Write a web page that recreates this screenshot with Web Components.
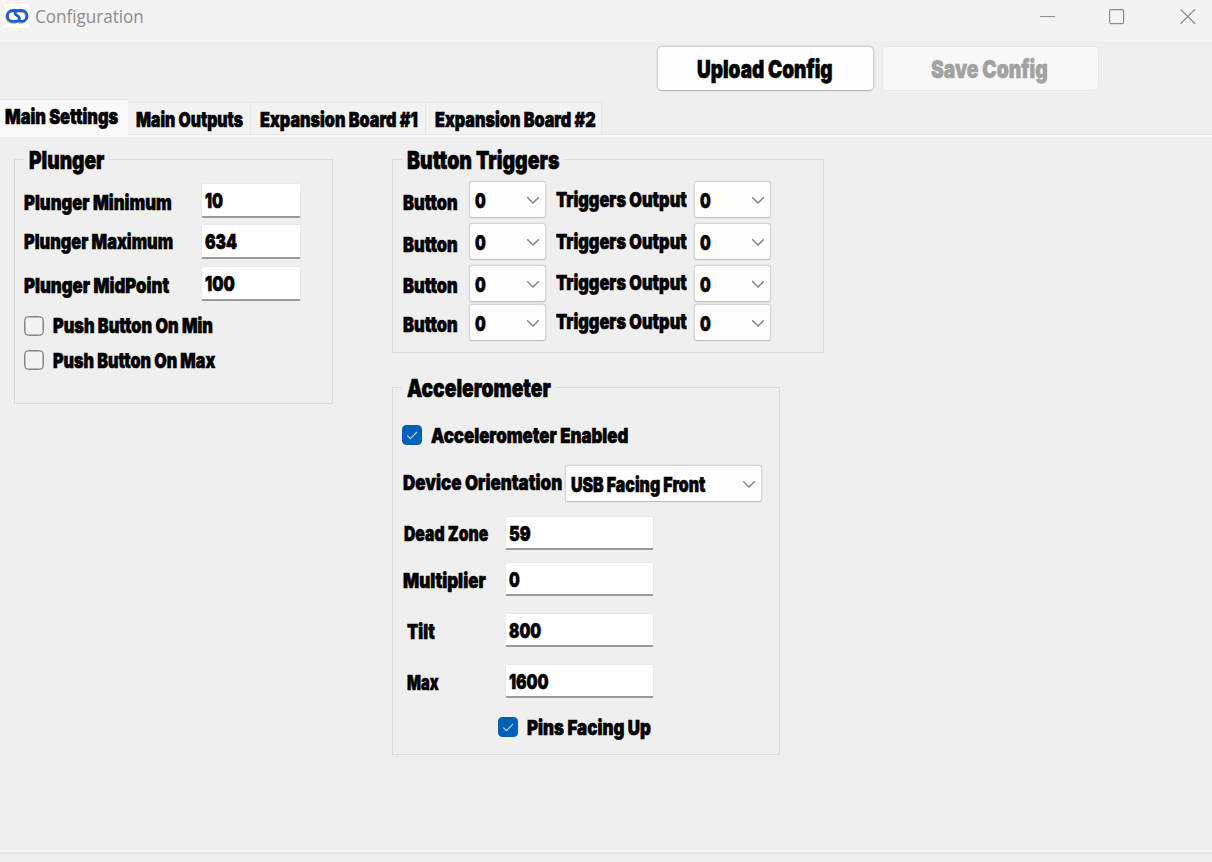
<!DOCTYPE html>
<html lang="en">
<head>
<meta charset="utf-8">
<title>Configuration</title>
<style>
html,body{margin:0;height:100%;overflow:hidden;background:#efefef}
</style>
</head>
<body>
<config-window></config-window>
<script>
function shadow(el, html){ const r = el.attachShadow({mode:'open'}); r.innerHTML = html; return r; }

/* Condensed heavy label, fitted to the width given in "w". */
class UiText extends HTMLElement{
  connectedCallback(){
    if(this.shadowRoot) return;
    const w = +this.getAttribute('w');
    const r = shadow(this, `<style>
      :host{display:block;flex:none;width:${w}px;height:20px;line-height:20px;white-space:nowrap;
        font:900 20.6px/20px Inter,"Liberation Sans",sans-serif;color:#000}
      :host([size=lg]){font-size:25px}
      :host([size=title]){font:400 18px/20px "Open Sans",sans-serif;color:#8c8c8c}
      :host([disabled]){color:#a2a2a2}
      span{display:inline-block;transform-origin:0 50%;-webkit-text-stroke:.6px currentColor}
      :host([size=title]) span{-webkit-text-stroke:0}
    </style><span><slot></slot></span>`);
    const s = r.querySelector('span');
    s.style.transform = `scaleX(${w / s.offsetWidth})`;
  }
}
customElements.define('ui-text', UiText);

class UiRow extends HTMLElement{
  connectedCallback(){
    if(this.shadowRoot) return;
    shadow(this, `<style>:host{display:flex;align-items:flex-start;height:${this.getAttribute('h')}px;margin-top:${this.getAttribute('mt')||0}px}</style><slot></slot>`);
  }
}
customElements.define('ui-row', UiRow);

class UiInput extends HTMLElement{
  connectedCallback(){
    if(this.shadowRoot) return;
    shadow(this, `<style>
      :host{display:block;flex:none;box-sizing:border-box;width:${this.getAttribute('w')}px;height:100%;padding:7px 0 0 3px;
        background:#fff;border:1px solid #e9e9e9;border-bottom:2px solid #999;border-radius:2px}
    </style><slot></slot>`);
  }
}
customElements.define('ui-input', UiInput);

class UiSelect extends HTMLElement{
  connectedCallback(){
    if(this.shadowRoot) return;
    shadow(this, `<style>
      :host{display:flex;flex:none;box-sizing:border-box;width:${this.getAttribute('w')}px;height:37px;padding:9px 5px 0 5px;justify-content:space-between;
        background:#fdfdfd;border:1px solid #d6d6d6;border-bottom-color:#c0c0c0;border-radius:3px;box-shadow:0 0 0 .5px #dedede}
      svg{flex:none;margin-top:5px}
    </style><slot></slot><svg width="14" height="9" viewBox="0 0 14 9"><path d="M1.2 1.3 7 7 12.8 1.3" fill="none" stroke="#858585" stroke-width="1.5"/></svg>`);
  }
}
customElements.define('ui-select', UiSelect);

class UiCheck extends HTMLElement{
  connectedCallback(){
    if(this.shadowRoot) return;
    shadow(this, `<style>
      :host{display:flex;height:20px;gap:9px}
      i{box-sizing:border-box;flex:none;width:20px;height:20px;border:1.5px solid #858585;border-radius:4.5px;background:#f3f3f3;box-shadow:inset 0 0 0 .5px #858585}
      :host([checked]) i{background:#005fb8;border:0;box-shadow:none}
      svg{display:none}
      :host([checked]) svg{display:block}
    </style><i><svg width="20" height="20" viewBox="0 0 20 20"><path d="M5.3 10.5 8.4 13.6 15 7" fill="none" stroke="#b4d4f2" stroke-width="1.2"/></svg></i><slot></slot>`);
  }
}
customElements.define('ui-check', UiCheck);

class UiGroup extends HTMLElement{
  connectedCallback(){
    if(this.shadowRoot) return;
    shadow(this, `<style>
      :host{display:block;flex:none;width:${this.getAttribute('w')}px;height:${this.getAttribute('h')}px}
      fieldset{box-sizing:border-box;height:100%;margin:0;padding:0 0 0 var(--inset,10px);border:1px solid #dadada;min-width:0}
      legend{height:19px;line-height:0;padding:0 5px;margin:0 0 0 calc(9px - var(--inset,10px))}
    </style><fieldset><legend><slot name="title"></slot></legend><slot></slot></fieldset>`);
  }
}
customElements.define('ui-group', UiGroup);

class UiButton extends HTMLElement{
  connectedCallback(){
    if(this.shadowRoot) return;
    shadow(this, `<style>
      :host{display:flex;box-sizing:border-box;width:217px;height:45px;padding:12px 2px 0 0;justify-content:center;
        background:#fdfdfd;border:1px solid #cfcfcf;border-bottom-color:#b8b8b8;border-radius:5px;box-shadow:0 0 0 .5px #dadada}
      :host([disabled]){background:#f8f8f8;border-color:#e8e8e8;box-shadow:none}
    </style><slot></slot>`);
  }
}
customElements.define('ui-button', UiButton);

class UiTab extends HTMLElement{
  connectedCallback(){
    if(this.shadowRoot) return;
    shadow(this, `<style>
      :host{display:block;box-sizing:border-box;width:${this.getAttribute('w')}px;height:33px;margin-top:3px;padding:7px 0 0 8px;
        background:#f2f2f2;border:1px solid #e6e6e6;border-left:0}
      :host([active]){height:38px;margin-top:0;padding:7px 0 0 5px;background:#f9f9f9;border:0;border-top:1px solid #e8e8e8}
    </style><slot></slot>`);
  }
}
customElements.define('ui-tab', UiTab);

class TitleBar extends HTMLElement{
  connectedCallback(){
    shadow(this, `<style>
      :host{display:flex;height:41px;background:#f3f3f3}
      .logo{width:24px;height:24px;margin:4px 6px 0 5px;background:#fff}
      .controls{display:flex;margin-left:auto;padding:9px 16px 0 0;gap:53px}
      svg{display:block}
      .controls svg:nth-child(2){margin-right:2px}
    </style>
    <div class="logo"><svg width="24" height="24" viewBox="0 0 24 24" fill="none" stroke-linecap="round">
      <path d="M10 6.6H7.6a5.5 5.5 0 0 0 0 11H11M13 6.6h3.5a5.5 5.5 0 0 1 0 11h-1.6" stroke="#ff9b61" stroke-width="2.8" transform="translate(-.5 .7)"/>
      <path d="M10.4 6.5H7.8a5.4 5.4 0 0 0 0 10.8h3.6c3 0 3.8-3 1.9-4.8L10.9 10.7C9.2 9 10.3 6.5 13.1 6.5h3.5a5.4 5.4 0 0 1 0 10.8h-.7" stroke="#0a61e6" stroke-width="2.8"/></svg></div>
    <ui-text size="title" w="109" style="margin-top:6px">Configuration</ui-text>
    <div class="controls">
      <svg width="16" height="16"><path d="M0 7.5h15" stroke="#8d8d8d"/></svg>
      <svg width="16" height="16"><rect x=".6" y=".6" width="14" height="14" rx="1.5" fill="none" stroke="#8b8b8b" stroke-width="1.2"/></svg>
      <svg width="16" height="16"><path d="M.6.4l14.4 14.4M15 .4.6 14.8" stroke="#8b8b8b" stroke-width="1.3"/></svg>
    </div>`);
  }
}
customElements.define('title-bar', TitleBar);

const trigger = (mt, a, b) => `<ui-row h="37" mt="${mt}">
  <ui-text w="55" style="margin-top:${a}px">Button</ui-text>
  <ui-select w="77" style="margin-left:11px"><ui-text w="11">0</ui-text></ui-select>
  <ui-text w="131" style="margin:${b}px 0 0 10px">Triggers Output</ui-text>
  <ui-select w="77" style="margin-left:7px"><ui-text w="11">0</ui-text></ui-select></ui-row>`;
const field = (mt, h, label, lw, lx, a, value, vw, left, w) => `<ui-row h="${h}" mt="${mt}">
  <ui-text w="${lw}" style="margin:${a}px 0 0 ${lx}px">${label}</ui-text>
  <ui-input w="${w}" style="margin-left:${left - lx - lw}px"><ui-text w="${vw}">${value}</ui-text></ui-input></ui-row>`;

class ConfigWindow extends HTMLElement{
  connectedCallback(){
    shadow(this, `<style>
      :host{display:flex;flex-direction:column;width:1212px;height:862px;background:#efefef}
      .tools{display:flex;gap:8px;height:58px;box-sizing:border-box;padding:5px 0 0 657px}
      .tabs{display:flex;height:38px;background:linear-gradient(#efefef 35px,#e6e6e6 35px,#e6e6e6 36px,#f7f7f7 36px,#f7f7f7 38px)}
      main{display:flex;flex:1;padding:13px 0 0 14px;gap:59px;align-items:flex-start}
      .column{display:flex;flex-direction:column;gap:25px}
      footer{height:12px;background:linear-gradient(#fafafa 2px,#e6e6e6 2px,#e6e6e6 4px,#efefef 4px)}
    </style>
    <title-bar></title-bar>
    <div class="tools"><ui-button><ui-text size="lg" w="136">Upload Config</ui-text></ui-button>
      <ui-button disabled><ui-text size="lg" disabled w="117">Save Config</ui-text></ui-button></div>
    <div class="tabs">
      <ui-tab active w="128"><ui-text w="113">Main Settings</ui-text></ui-tab>
      <ui-tab w="123"><ui-text w="107">Main Outputs</ui-text></ui-tab>
      <ui-tab w="175"><ui-text style="margin-left:1px" w="158">Expansion Board #1</ui-text></ui-tab>
      <ui-tab w="176"><ui-text style="margin-left:1px" w="161">Expansion Board #2</ui-text></ui-tab>
    </div>
    <main>
      <ui-group w="319" h="254" style="--inset:9px"><ui-text slot="title" size="lg" w="75">Plunger</ui-text>
        ${field(14, 35, 'Plunger Minimum', 148, 0, 10, '10', 18, 177, 100)}
        ${field(6, 35, 'Plunger Maximum', 149, 0, 8, '634', 32, 177, 100)}
        ${field(7, 35, 'Plunger MidPoint', 145, 0, 10, '100', 30, 177, 100)}
        <ui-row h="20" mt="15"><ui-check><ui-text w="160">Push Button On Min</ui-text></ui-check></ui-row>
        <ui-row h="20" mt="14"><ui-check><ui-text w="162" style="margin-top:1px">Push Button On Max</ui-text></ui-check></ui-row>
      </ui-group>
      <div class="column">
        <ui-group w="432" h="203"><ui-text slot="title" size="lg" w="152">Button Triggers</ui-text>
          ${trigger(12, 12, 9)}${trigger(5, 12, 9)}${trigger(5, 11, 8)}${trigger(2, 11, 8)}
        </ui-group>
        <ui-group w="388" h="377"><ui-text slot="title" size="lg" w="144">Accelerometer</ui-text>
          <ui-row h="20" mt="28"><ui-check checked style="margin-left:-1px"><ui-text w="197" style="margin-top:1px">Accelerometer Enabled</ui-text></ui-check></ui-row>
          <ui-row h="37" mt="20"><ui-text w="159" style="margin-top:8px">Device Orientation</ui-text>
            <ui-select w="197" style="margin-left:3px"><ui-text w="134">USB Facing Front</ui-text></ui-select></ui-row>
          ${field(14, 34, 'Dead Zone', 84, 1, 8, '59', 22, 102, 149)}
          ${field(12, 34, 'Multiplier', 83, 0, 9, '0', 11, 102, 149)}
          ${field(17, 34, 'Tilt', 28, 4, 9, '800', 32, 102, 149)}
          ${field(17, 34, 'Max', 32, 4, 9, '1600', 40, 102, 149)}
          <ui-row h="20" mt="19"><ui-check checked style="margin-left:95px"><ui-text w="124" style="margin-top:1px">Pins Facing Up</ui-text></ui-check></ui-row>
        </ui-group>
      </div>
    </main>
    <footer></footer>`);
  }
}
customElements.define('config-window', ConfigWindow);
</script>
</body>
</html>
